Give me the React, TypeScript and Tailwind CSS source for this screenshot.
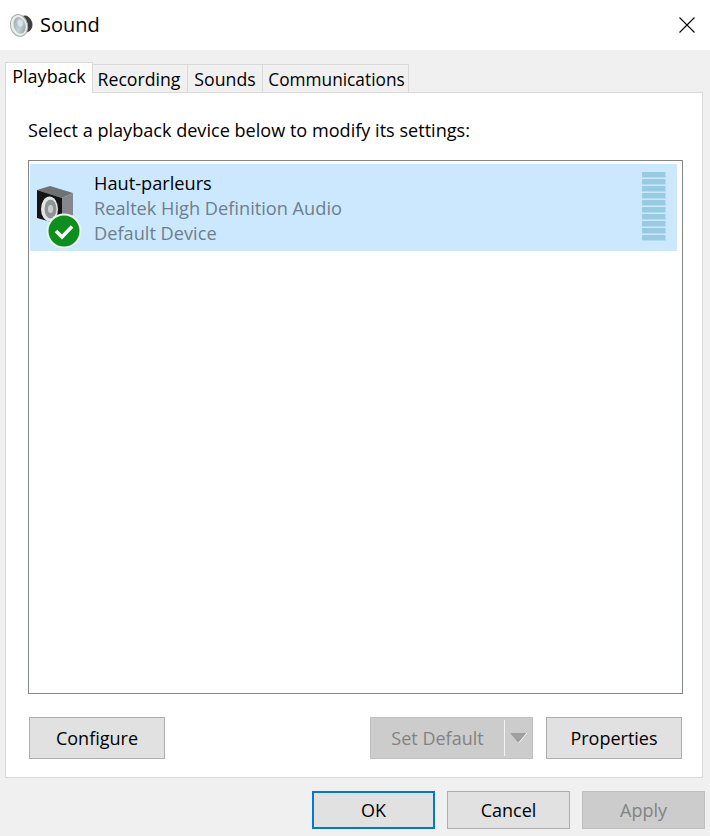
import React from 'react'

const font = "font-['Open_Sans','Noto_Sans',sans-serif]"

const SpeakerTitleIcon = () => (
  <svg width="24" height="26" viewBox="0 0 24 26">
    <defs>
      <linearGradient id="cone" x1="0" y1="0" x2="1" y2="1">
        <stop offset="0" stopColor="#9ea3a4" />
        <stop offset="0.55" stopColor="#c4d2d6" />
        <stop offset="1" stopColor="#8b9192" />
      </linearGradient>
    </defs>
    <g transform="rotate(-14 12 13)">
      <ellipse cx="16.5" cy="13" rx="7" ry="8.5" fill="#3f3f41" />
      <ellipse cx="10" cy="13" rx="8.5" ry="11" fill="#eceeee" stroke="#a9adad" strokeWidth="1" />
      <ellipse cx="10.5" cy="13" rx="6" ry="8.5" fill="url(#cone)" />
      <ellipse cx="11.5" cy="11" rx="2.5" ry="3.5" fill="#d6e6ea" />
    </g>
  </svg>
)

const SpeakerDeviceIcon = () => (
  <svg width="50" height="64" viewBox="0 0 50 64">
    {/* cabinet */}
    <path d="M0 5 L13 1 L36 8 L25 13 Z" fill="#6f7173" />
    <path d="M25 13 L36 8 L36 30 L25 38 Z" fill="#85878a" />
    <path d="M0 5 L25 13 L25 40 L0 33 Z" fill="#141414" />
    {/* cone */}
    <ellipse cx="12.5" cy="24" rx="8.5" ry="12.5" fill="#e3e5e5" />
    <ellipse cx="13.5" cy="24" rx="6" ry="9.5" fill="#8f9596" />
    <ellipse cx="13.5" cy="24" rx="2.5" ry="4" fill="#c9cfd0" />
    {/* default badge */}
    <circle cx="27" cy="46" r="17.5" fill="#eaf4ea" />
    <circle cx="27" cy="46" r="15.5" fill="#0c8f1c" />
    <path d="M19 46 L25 52 L35 41.5" fill="none" stroke="#ffffff" strokeWidth="3.5" />
  </svg>
)

const CloseIcon = () => (
  <svg width="16" height="16" viewBox="0 0 16 16">
    <path d="M0.5 0.5 L15.5 15.5 M15.5 0.5 L0.5 15.5" stroke="#000000" strokeWidth="1.1" />
  </svg>
)

const Tab = ({ label, className }: { label: string; className: string }) => (
  <div className={`${className} -ml-px flex h-[28px] items-center justify-center border border-b-0 border-[#d9d9d9] bg-[#f0f0f0] pt-[2px] text-black`}>
    {label}
  </div>
)

const Bar = () => (
  <div className="h-[6px] w-6 border-r border-b border-[#b4dcf0] bg-[#98cae3]" />
)

const App: React.FC = () => {
  return (
    <div className={`${font} flex h-[836px] w-[710px] flex-col overflow-hidden bg-[#f0f0f0]`}>
      {/* title bar */}
      <header className="flex h-[50px] items-center bg-white pr-[15px] pl-[9px]">
        <SpeakerTitleIcon />
        <span className="ml-[7px] text-[20px] text-black">Sound</span>
        <div className="ml-auto">
          <CloseIcon />
        </div>
      </header>

      {/* tabs */}
      <nav className="flex h-[42px] items-end pl-[5px]">
        <div className="relative z-10 -mb-px flex h-[31px] w-[88px] items-center justify-center border border-b-0 border-[#d9d9d9] bg-white pb-1 text-[18px] text-black">
          Playback
        </div>
        <Tab label="Recording" className="w-[96px] pr-[2px] text-[17.7px]" />
        <Tab label="Sounds" className="w-[76px] text-[17.7px]" />
        <Tab label="Communications" className="w-[147px] pl-[2px] text-[17.3px]" />
      </nav>

      {/* panel */}
      <main className="ml-[5px] flex h-[686px] w-[698px] flex-col border border-[#d9d9d9] bg-white pt-[17px] pr-5 pl-[22px]">
        <p className="h-[50px] text-[18.1px] leading-[40px] text-black">
          Select a playback device below to modify its settings:
        </p>
        <section className="h-[534px] w-[655px] border border-[#82878c] px-px pt-[3px] pr-[5px]">
          <div className="flex h-[87px] items-center bg-[#cce8ff]">
            <div className="mt-[19px] ml-[7px]">
              <SpeakerDeviceIcon />
            </div>
            <div className="mt-[2px] ml-[7px] flex flex-col text-[18.2px] leading-[25px]">
              <span className="text-black">Haut-parleurs</span>
              <span className="text-[#6d7f8c]">Realtek High Definition Audio</span>
              <span className="text-[#6d7f8c]">Default Device</span>
            </div>
            <div className="mr-[11px] mb-[3px] ml-auto flex flex-col gap-px">
              {Array.from({ length: 10 }).map((_, i) => (
                <Bar key={i} />
              ))}
            </div>
          </div>
        </section>

        <div className="mt-[23px] flex items-start pl-px">
          <button className="h-[42px] w-[136px] border border-[#adadad] bg-[#e1e1e1] text-[18px] text-black">
            Configure
          </button>
          <div className="ml-auto flex h-[42px] w-[163px] items-center border border-[#bfbfbf] bg-[#cccccc] text-[18px] text-[#838383]">
            <span className="flex-1 text-center">Set Default</span>
            <span className="h-[36px] w-px bg-[#f2f2f2]" />
            <svg width="27" height="12" viewBox="0 0 27 12">
              <path d="M5 1 H22 L13.5 11 Z" fill="#a0a0a0" />
              <path d="M22 1 L13.5 11" stroke="#f5f5f5" strokeWidth="1" />
            </svg>
          </div>
          <button className="ml-[13px] h-[42px] w-[136px] border border-[#adadad] bg-[#e1e1e1] text-[18px] text-black">
            Properties
          </button>
        </div>
      </main>

      {/* dialog buttons */}
      <footer className="mt-[13px] flex gap-3 pl-[312px]">
        <button className="h-[38px] w-[123px] border-2 border-[#0078d7] bg-[#e1e1e1] text-[18px] text-black">
          OK
        </button>
        <button className="h-[38px] w-[123px] border border-[#adadad] bg-[#e1e1e1] text-[18px] text-black">
          Cancel
        </button>
        <button className="h-[38px] w-[123px] border border-[#bfbfbf] bg-[#cccccc] text-[18px] text-[#838383]">
          Apply
        </button>
      </footer>
    </div>
  )
}

export default App
